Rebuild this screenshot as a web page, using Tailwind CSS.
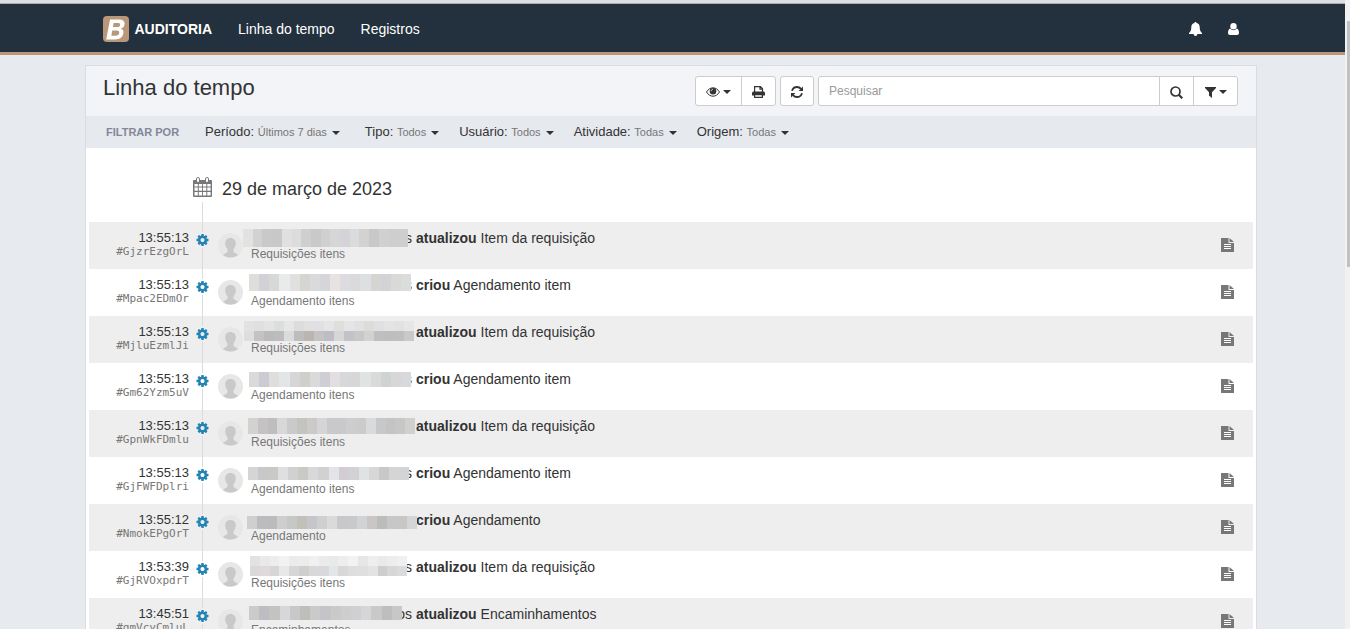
<!DOCTYPE html>
<html lang="pt-BR">
<head>
<meta charset="utf-8">
<title>Auditoria - Linha do tempo</title>
<script src="https://cdn.jsdelivr.net/npm/@tailwindcss/browser@4"></script>
</head>
<body class="flex h-screen overflow-hidden bg-[#e7eaef] font-['Liberation_Sans',Arial,sans-serif] text-[#333]">

<svg class="hidden" aria-hidden="true">
  <symbol id="cog" viewBox="0 0 1536 1536"><path d="M1024 768q0-106-75-181t-181-75-181 75-75 181 75 181 181 75 181-75 75-181zm512-109v222q0 12-8 23t-20 13l-185 28q-19 54-39 91 35 50 107 138 10 12 10 25t-9 23q-27 37-99 108t-94 71q-12 0-26-9l-138-108q-44 23-91 38-16 136-29 186-7 28-36 28h-222q-14 0-24.500-8.500t-11.500-21.500l-28-184q-49-16-90-37l-141 107q-10 9-25 9-14 0-25-11-126-114-165-168-7-10-7-23 0-12 8-23 15-21 51-66.500t54-70.500q-27-50-41-99l-183-27q-13-2-21-12.500t-8-23.500v-222q0-12 8-23t19-13l186-28q14-46 39-92-40-57-107-138-10-12-10-24 0-10 9-23 26-36 98.500-107.500t94.500-71.500q13 0 26 10l138 107q44-23 91-38 16-136 29-186 7-28 36-28h222q14 0 24.500 8.500t11.500 21.500l28 184q49 16 90 37l142-107q9-9 24-9 13 0 25 10 129 119 165 170 7 8 7 22 0 12-8 23-15 21-51 66.500t-54 70.500q26 50 41 98l183 28q13 2 21 12.500t8 23.500z"/></symbol>
  <symbol id="caret" viewBox="0 0 8 4"><path d="M0 0h8L4 4z"/></symbol>
  <symbol id="person" viewBox="0 0 25 25"><circle cx="12.500" cy="12.500" r="12.500" fill="#e7e7e7"/><path fill="#c9c9c9" d="M12.500 5c3.400 0 5.300 2.200 5.300 5.600 0 2-.9 4.300-2.300 5.600v2.400c0 1.300 2.600 1.700 4.600 3.300a12.500 12.500 0 0 1-15.200 0c2-1.600 4.600-2 4.600-3.300v-2.400c-1.400-1.300-2.300-3.600-2.300-5.600C7.200 7.200 9.100 5 12.500 5z"/></symbol>
  <symbol id="doc" viewBox="0 0 13 14"><path d="M0 0h7.500v5H13v9H0zM8.500 0l4.500 4H8.500z"/><path stroke="#fff" d="M3 6.500h7M3 8.500h7M3 10.500h7"/></symbol>
</svg>

<div class="flex min-w-0 flex-1 flex-col">
  <div class="h-1 shrink-0 border-b border-[#a9adb3] bg-[#dcdee2]"></div>
  <header class="shrink-0 border-b-3 border-[#b89879] bg-[#23303d] text-white">
    <div class="mx-auto flex h-12 max-w-[1140px] items-center pt-0.5">
      <a href="#" class="flex items-center gap-1.5 text-sm font-bold">
        <svg class="size-[26px]" viewBox="0 0 26 26" aria-hidden="true"><rect width="26" height="26" rx="4" fill="#b89879"/><path fill="#fff" fill-rule="evenodd" d="M7 3.500h8.500c4.400 0 6.500 1.700 6 5-.3 2.200-1.600 3.500-3.700 4.100 2 .7 3 2.100 2.600 4.500-.6 4-3.400 6.400-8.300 6.400H3.200zM10.600 7l-.7 4.100h3.900c2 0 3.100-.7 3.300-2.200.2-1.300-.6-1.900-2.500-1.900zM9.200 14.600l-.8 5.200h4.200c2.100 0 3.400-.9 3.600-2.700.2-1.700-.7-2.500-2.800-2.500z"/></svg>
        AUDITORIA
      </a>
      <nav class="ml-[26px] flex gap-[26px] text-sm">
        <a href="#">Linha do tempo</a>
        <a href="#">Registros</a>
      </nav>
      <div class="ml-auto flex items-center gap-[26px] pr-1">
        <button type="button" aria-label="Notificações"><svg class="h-[14px] w-[13px] fill-white" viewBox="0 0 13 14"><path d="M6.500 0c.7 0 1 .4 1 .9C9.800 1.400 10.700 3 10.700 5c0 3.300.8 4.700 2.300 6v1H8.400c-.1 1.300-.9 2-1.900 2s-1.800-.7-1.900-2H0v-1c1.500-1.300 2.300-2.700 2.300-6 0-2 .9-3.600 3.200-4.100 0-.5.300-.9 1-.9z"/></svg></button>
        <button type="button" aria-label="Usuário"><svg class="h-3 w-[11px] fill-white" viewBox="0 0 11 12"><circle cx="5.500" cy="3.200" r="3.200"/><path d="M2.200 5.600a4.300 4.300 0 0 0 6.600 0C10.400 6.100 11 8 11 10c0 1.300-.8 2-2 2H2c-1.200 0-2-.7-2-2 0-2 .6-3.900 2.200-4.400z"/></svg></button>
      </div>
    </div>
  </header>

  <main class="min-h-0 flex-1 pt-2.5 pr-[3px]">
    <section class="mx-auto h-full max-w-[1172px] border border-b-0 border-[#d9dce1] bg-white">
      <div class="flex h-[50px] items-start bg-[#f3f4f8] pt-2.5 pr-[18px] pl-[17px]">
        <h1 class="text-[22px] leading-6">Linha do tempo</h1>
        <div class="ml-auto flex h-[30px] gap-1 text-[#333]">
          <div class="flex rounded-[3px] border border-[#ccc] bg-white">
            <button type="button" aria-label="Exibir" class="flex w-[46px] items-center justify-center gap-[3px] border-r border-[#ccc] pt-0.5">
              <svg class="h-[10px] w-[14px]" viewBox="0 0 14 10"><path fill="none" stroke="#333" d="M.5 5C3.800-.6 10.200-.6 13.500 5 10.200 10.600 3.800 10.600.5 5z"/><circle cx="7" cy="4.200" r="3.300" fill="#333"/><path fill="none" stroke="#fff" stroke-width=".8" d="M5.200 4.200C5.200 3 6 2.400 7 2.400"/></svg>
              <svg class="h-1 w-2 fill-[#333]"><use href="#caret"/></svg>
            </button>
            <button type="button" aria-label="Imprimir" class="flex w-[33px] items-center justify-center pt-0.5"><svg class="h-3 w-[13px]" viewBox="0 0 13 12"><path fill="none" stroke="#333" stroke-width="1.200" d="M2.600 6V.7H8.500l2 2V6M8 .7v2.500h2.500"/><path fill="#333" d="M1 5.500h11l1 1V9.500H0V6.500z"/><path fill="#fff" stroke="#333" stroke-width="1.200" d="M2.600 8.600h7.800v2.800H2.600z"/></svg></button>
          </div>
          <button type="button" aria-label="Atualizar" class="flex w-[34px] items-center justify-center rounded-[3px] border border-[#ccc] bg-white pt-0.5"><svg class="size-3" viewBox="0 0 12 12"><path fill="none" stroke="#333" stroke-width="1.800" d="M1 4.800C1.800 2.400 3.700 1 6 1c1.700 0 3 .7 4 1.900M11 7.200C10.200 9.600 8.300 11 6 11c-1.700 0-3-.7-4-1.900"/><path fill="#333" d="M12 .6V5H7.600zM0 11.400V7h4.400z"/></svg></button>
          <form class="flex rounded-[3px] border border-[#ccc] bg-white">
            <input type="search" aria-label="Pesquisar" placeholder="Pesquisar" class="w-[340px] px-2.5 text-xs placeholder:text-[#999]">
            <button type="button" aria-label="Buscar" class="flex w-[35px] items-center justify-center border-x border-[#ccc] pt-0.5"><svg class="size-[13px]" viewBox="0 0 13 13" fill="none" stroke="#333"><circle cx="5.500" cy="5.500" r="4.500" stroke-width="1.700"/><path stroke-width="2.200" d="M8.800 8.800l3.500 3.500"/></svg></button>
            <button type="button" aria-label="Filtros" class="flex w-[43px] items-center justify-center gap-[3px] pt-0.5"><svg class="h-[11px] w-[11px] fill-[#333]" viewBox="0 0 11 11"><path d="M0 0h11v1L7 5.200V11L4 8.500V5.200L0 1z"/></svg><svg class="h-1 w-2 fill-[#333]"><use href="#caret"/></svg></button>
          </form>
        </div>
      </div>

      <div class="flex h-8 items-center bg-[#e6e9ee] pl-5 text-[13px]">
        <span class="w-[99px] text-[11px] font-bold text-[#83879a]">FILTRAR POR</span>
        <div id="filters" class="flex gap-5"></div>
      </div>

      <div class="px-[3px]">
        <div class="flex h-[54px] items-end gap-2.5 pl-[104px]">
          <svg class="mb-[5px] h-5 w-[19px]" viewBox="0 0 19 20"><rect y="3" width="19" height="17" rx="1" fill="#777"/><path fill="#fff" d="M1.500 7h3.300v2.600H1.500zM5.800 7h3.300v2.600H5.800zM10 7h3.300v2.600H10zM14.300 7h3.300v2.600h-3.300zM1.500 10.600h3.300v3.200H1.500zM5.800 10.600h3.300v3.200H5.800zM10 10.600h3.300v3.200H10zM14.300 10.600h3.300v3.200h-3.300zM1.500 14.900h3.300v3.500H1.500zM5.800 14.900h3.300v3.500H5.800zM10 14.900h3.300v3.500H10zM14.300 14.900h3.300v3.500h-3.300z"/><rect x="3.500" y=".5" width="3" height="5" rx="1.400" fill="#fff" stroke="#777"/><rect x="12.500" y=".5" width="3" height="5" rx="1.400" fill="#fff" stroke="#777"/></svg>
          <h2 class="mb-[3px] text-lg leading-5">29 de março de 2023</h2>
        </div>
        <div class="ml-[113px] h-5 w-px bg-[#d9dbde]"></div>
        <ul id="rows"></ul>
      </div>
    </section>
  </main>
</div>

<div class="w-[5px] shrink-0 bg-[#f1f1f1] pt-[21px] pl-0.5" aria-hidden="true"><div class="h-[246px] bg-[#c1c1c1]"></div></div>

<script>
document.getElementById('filters').innerHTML = [
  ['Período', 'Últimos 7 dias'],
  ['Tipo', 'Todos'],
  ['Usuário', 'Todos'],
  ['Atividade', 'Todas'],
  ['Origem', 'Todas']
].map(function (f) {
  return `<button type="button" class="flex items-center whitespace-nowrap first:mr-[5px]"><span>${f[0]}: <span class="text-[11px] text-[#777]">${f[1]}</span></span><svg class="mt-0.5 ml-[5px] h-1 w-2 fill-[#333]"><use href="#caret"/></svg></button>`;
}).join('');

// Each mask: left, top, width, height and its strips of tile colours.
var item = ['atualizou', 'Item da requisição', 'Requisições itens'];
var agenda = ['criou', 'Agendamento item', 'Agendamento itens'];
var rows = [
  ['13:55:13', '#GjzrEzgOrL', item, 's', [-8, 7, 165, 18, ['e2e2e0 d2d2d2 c9c9c9 c8c8c8 e0e0e0 dcdcde cfcfcf c9c9c7 d0d0d0 d6d6d6 d4d4d8 dadbdd d3d2d0 c8c8c8 d0d0d2 cecece cecece']]],
  ['13:55:13', '#Mpac2EDmOr', agenda, 's', [-2, 5, 162, 17, ['dededc d2d2d6 d8d8d6 e9ebea e0e0e0 d5d6d2 dadadc d6d5da e8e2e3 dcdce0 dadada dde0e0 d5d5d3 d3d3d5 d9dad8 dcdcda']]],
  ['13:55:13', '#MjluEzmlJi', item, '', [-7, 5, 170, 20, ['e2e2e2 dfdfdf e3e3e3 dcdddd e6e6e6 dcdcdc e0e0e0 e1e1e3 e5e5e5 dededc e5e5e5 e0e1e1 dcdcda e0e0e2 e4e4e4 e2e2e2 e6e6e6', 'dedede c6c2c3 bababa bcbcbc dadcdc bdbdbd b9b6b2 c4c2c2 bdbdc4 d6d6d6 c3c3c7 c8c8ca d2d2ce c0bfbf bebebe c1bebb c7c9cb']]],
  ['13:55:13', '#Gm62Yzm5uV', agenda, 's', [-2, 9, 162, 15, ['dadada cbcbd1 dededc e3e6e6 d6d6d6 cfd0cc dadada cfced4 e3dfe0 d8d8dc d7d7d7 dfe3e4 d9dbd9 cfd3d3 d7d7d7 d9d9d9']]],
  ['13:55:13', '#GpnWkFDmlu', item, '', [-3, 8, 167, 16, ['d2d2d0 c4c2c2 bebebe d8d8d8 cacaca c3c3bf cbcac8 d5d5d7 c9c9c9 c9c9cb cdcdcd cbcbcb dadada c6c8ca c4c4c4 c7c7c7 d0d0ce']]],
  ['13:55:13', '#GjFWFDplri', agenda, 's', [-3, 10, 161, 13, ['d5d5d5 c8c8c8 cbc9c6 dedee3 d1d1d1 cac9c6 d8d8d8 d1d1d1 e4e4e8 d1cdd3 d2d2d2 e0e3e3 d7d7d7 c7c8c8 d5d5d5 d2d4d5']]],
  ['13:55:12', '#NmokEPgOrT', ['criou', 'Agendamento', 'Agendamento'], '', [-4, 12, 170, 13, ['cfcfcf bcbcc0 bbbbbb cecece c6c8c8 c2c0b9 c4c6ca cfcfd1 dadada c8c8ca c7c9cb d0d4d6 c9c6c5 babdbb c7c7c7 cac6c6 d3d5d6']]],
  ['13:53:39', '#GjRVOxpdrT', item, 's', [-1, 5, 157, 20, ['e2e2e2 e9e9e9 ededed f2f2f2 ebebeb ececec f0f0f0 ebebeb e9e9e9 ededed f2f2f2 e6e6e6 eeeeee eaeaea ededed f0f0f0', 'dad8da e0d9db d6d6d6 e8e8e8 d6d6d6 d1cfcc d8d8d8 d8d8dd e3e6e8 d8d8d8 dedede dee0e0 e3e3e3 cecece d7d7d7 dbdbdb']]],
  ['13:45:51', '#qmVcyCmluL', ['atualizou', 'Encaminhamentos', 'Encaminhamentos'], 'os', [-2, 8, 153, 14, ['cbcbcb bebec2 c3c3c1 d7d7d9 c8c8c8 bebeba cacaca c5c5c9 cacaca cecece d0d0d2 d6d6d8 c9c9c9 bebebe c7c7c7']]]
];
document.getElementById('rows').innerHTML = rows.map(function (r) {
  var m = r[4];
  var strips = m[4].map(function (line) {
    var tiles = line.split(' ').map(function (c) {
      return `<span class="flex-1" style="background:#${c}"></span>`;
    }).join('');
    return `<span class="flex flex-1">${tiles}</span>`;
  }).join('');
  return `<li class="flex h-[47px] odd:bg-[#eee]">
    <div class="w-[100px] shrink-0 pt-2 text-right">
      <div class="text-[13px] leading-4">${r[0]}</div>
      <div class="font-['DejaVu_Sans_Mono',monospace] text-[11px] leading-3 text-[#777]">${r[1]}</div>
    </div>
    <div class="flex w-[27px] shrink-0 flex-col items-center">
      <span class="h-2.5 w-px bg-[#d9dbde]"></span>
      <svg class="my-0.5 h-3 w-[13px] shrink-0 fill-[#2383b4]"><use href="#cog"/></svg>
      <span class="w-px flex-1 bg-[#d9dbde]"></span>
    </div>
    <svg class="mt-[11px] ml-0.5 size-[25px] shrink-0"><use href="#person"/></svg>
    <div class="relative ml-2 flex-1 pt-2 text-sm leading-4">
      <div class="flex gap-1"><span class="w-[161px] text-right">${r[3]}</span><span><b>${r[2][0]}</b> ${r[2][1]}</span></div>
      <div class="text-xs leading-4 text-[#777]">${r[2][2]}</div>
      <span class="absolute flex flex-col" style="left:${m[0]}px;top:${m[1]}px;width:${m[2]}px;height:${m[3]}px">${strips}</span>
    </div>
    <a href="#" aria-label="Detalhes" class="mt-4 mr-[19px]"><svg class="h-[14px] w-[13px] fill-[#777]"><use href="#doc"/></svg></a>
  </li>`;
}).join('');
</script>
</body>
</html>
